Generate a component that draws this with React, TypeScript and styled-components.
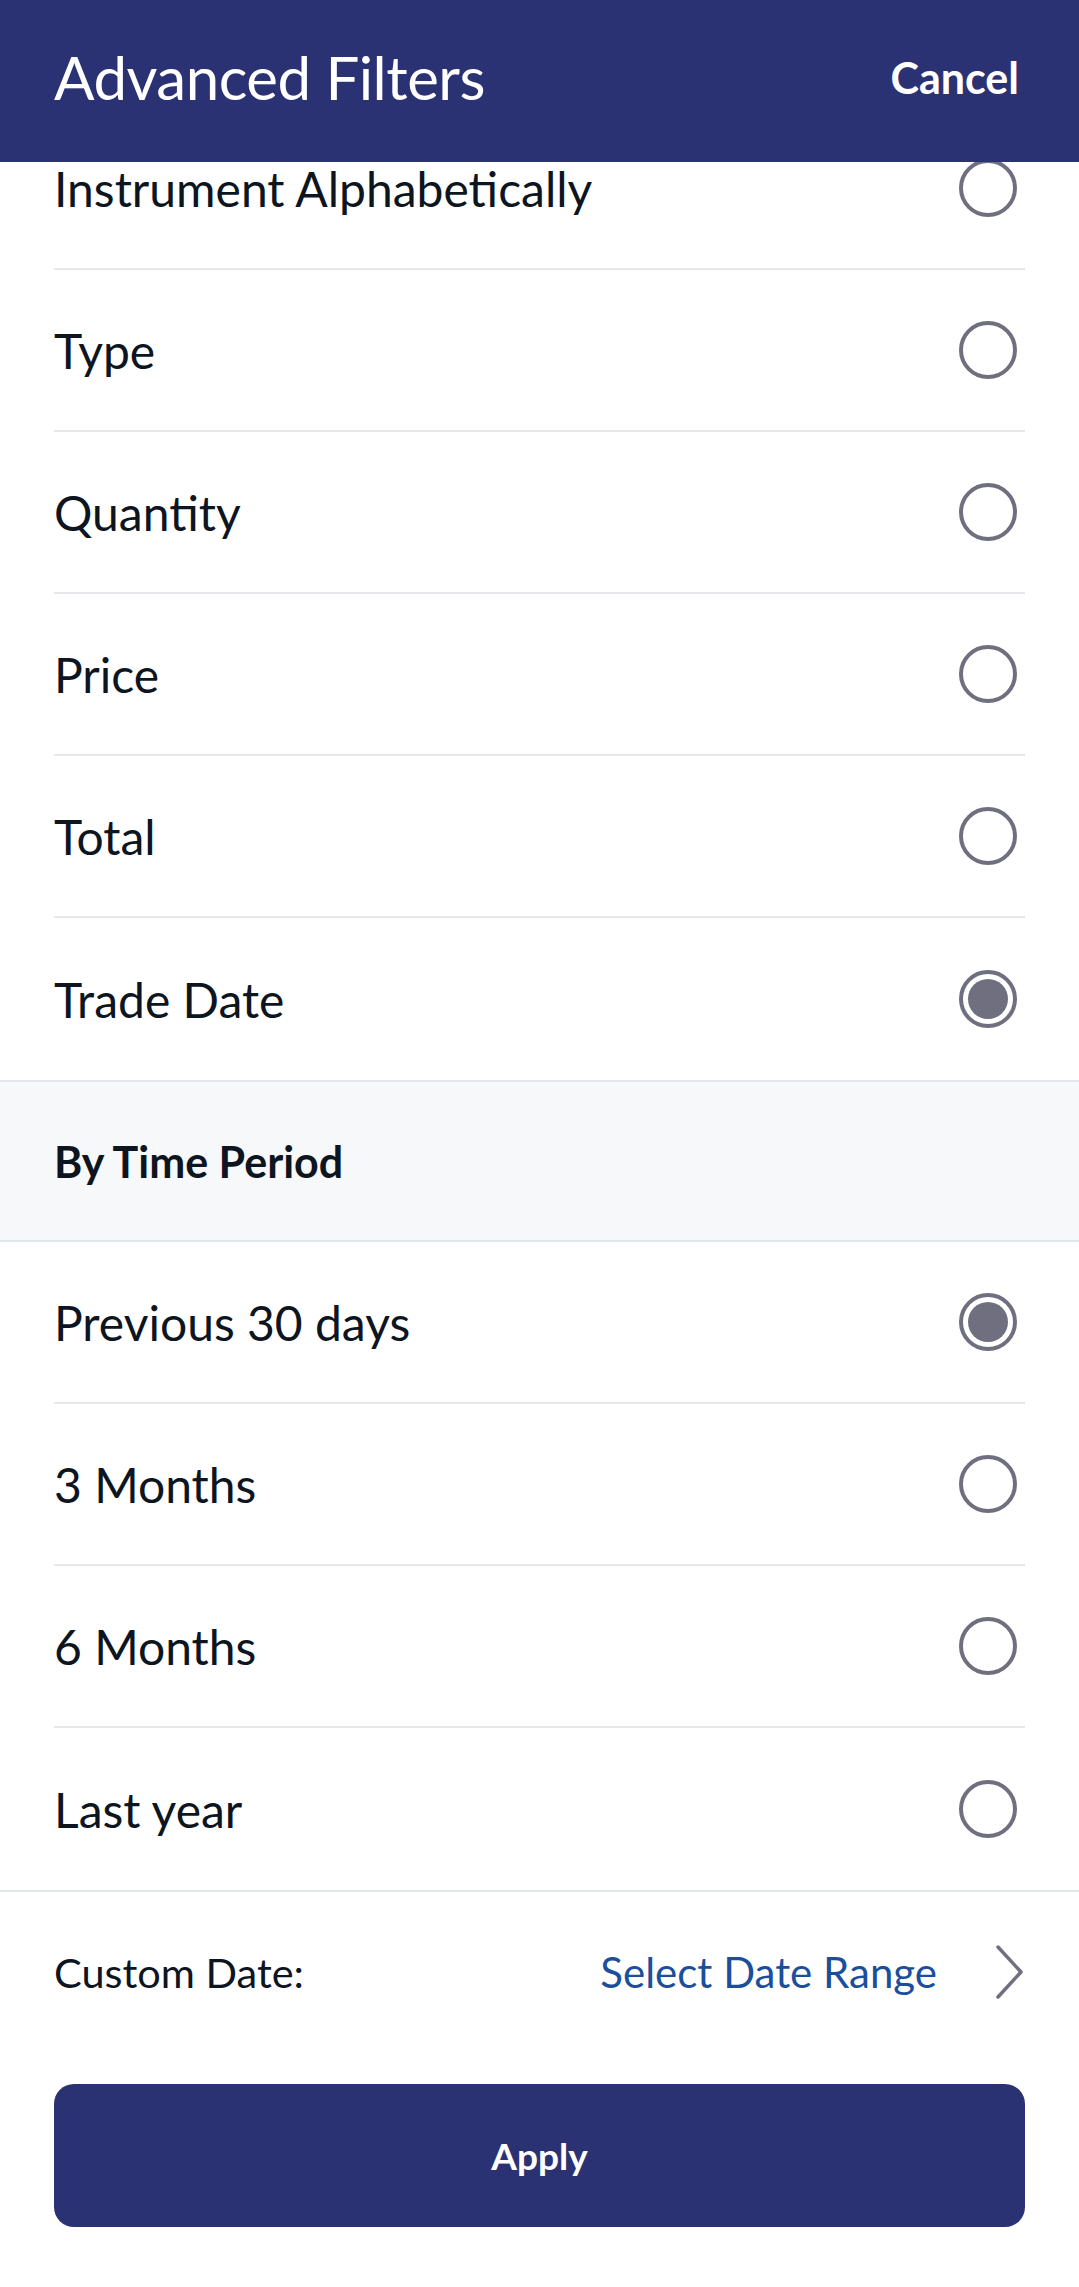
import React, { useState } from 'react'
import styled, { createGlobalStyle } from 'styled-components'

const GlobalStyle = createGlobalStyle`
  html, body {
    margin: 0;
    padding: 0;
    background: #ffffff;
  }
  body {
    font-family: Lato, 'Noto Sans', sans-serif;
    color: #0d1521;
  }
`

const Screen = styled.div`
  width: 1079px;
  height: 2287px;
  display: flex;
  flex-direction: column;
  overflow: hidden;
  background: #fff;
`

const Header = styled.header`
  flex: 0 0 162px;
  box-sizing: border-box;
  background: #2b3274;
  display: flex;
  align-items: center;
  justify-content: space-between;
  padding: 0 60px 8px 54px;
  position: relative;
  z-index: 2;
`

const Title = styled.h1`
  margin: 0;
  font-size: 60px;
  font-weight: 400;
  color: #fff;
  letter-spacing: -0.5px;
`

const CancelButton = styled.button`
  all: unset;
  cursor: pointer;
  font-size: 43px;
  font-weight: 700;
  color: #fff;
`

const ScrollArea = styled.div`
  flex: 1;
  overflow: hidden;
  display: flex;
  flex-direction: column;
`

// content scrolled up by 54px, first row sits partly under the header
const Scrolled = styled.div`
  margin-top: -54px;
`

const List = styled.div`
  padding: 0 54px;
`

const Row = styled.label<{ divided: boolean }>`
  height: 162px;
  box-sizing: border-box;
  display: flex;
  align-items: center;
  justify-content: space-between;
  cursor: pointer;
  ${({ divided }) => divided && `border-bottom: 2px solid #e5e7ea;`}
`

const RowText = styled.span`
  font-size: 48px;
  color: #0d1521;
`

const Radio = styled.span<{ checked: boolean }>`
  width: 58px;
  height: 58px;
  box-sizing: border-box;
  border-radius: 50%;
  border: 4.5px solid #6f6f80;
  margin-right: 8px;
  display: flex;
  align-items: center;
  justify-content: center;

  &::after {
    content: '';
    width: 40px;
    height: 40px;
    border-radius: 50%;
    background: ${({ checked }) => (checked ? '#6f6f80' : 'transparent')};
  }
`

const SectionHeader = styled.div`
  height: 162px;
  box-sizing: border-box;
  background: #f7f8f9;
  border-top: 2.5px solid #e3e7ec;
  border-bottom: 2.5px solid #e3e7ec;
  display: flex;
  align-items: center;
  padding: 0 54px;
  font-size: 43px;
  font-weight: 700;
  color: #0d1521;
`

const CustomRow = styled.div`
  border-top: 2.5px solid #e3e7ec;
  height: 162px;
  box-sizing: border-box;
  padding: 0 54px;
  display: flex;
  align-items: center;
  justify-content: space-between;
`

const CustomLabel = styled.span`
  font-size: 41.5px;
  color: #0d1521;
`

const DateLink = styled.button`
  all: unset;
  cursor: pointer;
  display: flex;
  align-items: center;
  gap: 58px;
  font-size: 42px;
  color: #1b4f9c;

  & svg {
    display: block;
  }
`

const Footer = styled.div`
  padding: 32px 54px 0;
`

const ApplyButton = styled.button`
  all: unset;
  cursor: pointer;
  box-sizing: border-box;
  width: 100%;
  height: 143px;
  border-radius: 20px;
  background: #2b3274;
  color: #fff;
  font-size: 37px;
  font-weight: 700;
  display: flex;
  align-items: center;
  justify-content: center;
`

const sortOptions = [
  'Instrument Alphabetically',
  'Type',
  'Quantity',
  'Price',
  'Total',
  'Trade Date',
]

const periodOptions = ['Previous 30 days', '3 Months', '6 Months', 'Last year']

const Chevron = () => (
  <svg width="30" height="54" viewBox="0 0 30 54" fill="none">
    <path d="M3 2 L26 27 L3 52" stroke="#6f6f80" strokeWidth="3.5" strokeLinecap="round" strokeLinejoin="round" />
  </svg>
)

const App = () => {
  const [sortBy, setSortBy] = useState('Trade Date')
  const [period, setPeriod] = useState('Previous 30 days')

  return (
    <Screen>
      <GlobalStyle />
      <Header>
        <Title>Advanced Filters</Title>
        <CancelButton>Cancel</CancelButton>
      </Header>
      <ScrollArea>
        <Scrolled>
          <List>
            {sortOptions.map((opt, i) => (
              <Row key={opt} divided={i < sortOptions.length - 1} onClick={() => setSortBy(opt)}>
                <RowText>{opt}</RowText>
                <Radio checked={sortBy === opt} />
              </Row>
            ))}
          </List>
          <SectionHeader>By Time Period</SectionHeader>
          <List>
            {periodOptions.map((opt, i) => (
              <Row key={opt} divided={i < periodOptions.length - 1} onClick={() => setPeriod(opt)}>
                <RowText>{opt}</RowText>
                <Radio checked={period === opt} />
              </Row>
            ))}
          </List>
          <CustomRow>
            <CustomLabel>Custom Date:</CustomLabel>
            <DateLink>
              Select Date Range
              <Chevron />
            </DateLink>
          </CustomRow>
          <Footer>
            <ApplyButton>Apply</ApplyButton>
          </Footer>
        </Scrolled>
      </ScrollArea>
    </Screen>
  )
}

export default App
